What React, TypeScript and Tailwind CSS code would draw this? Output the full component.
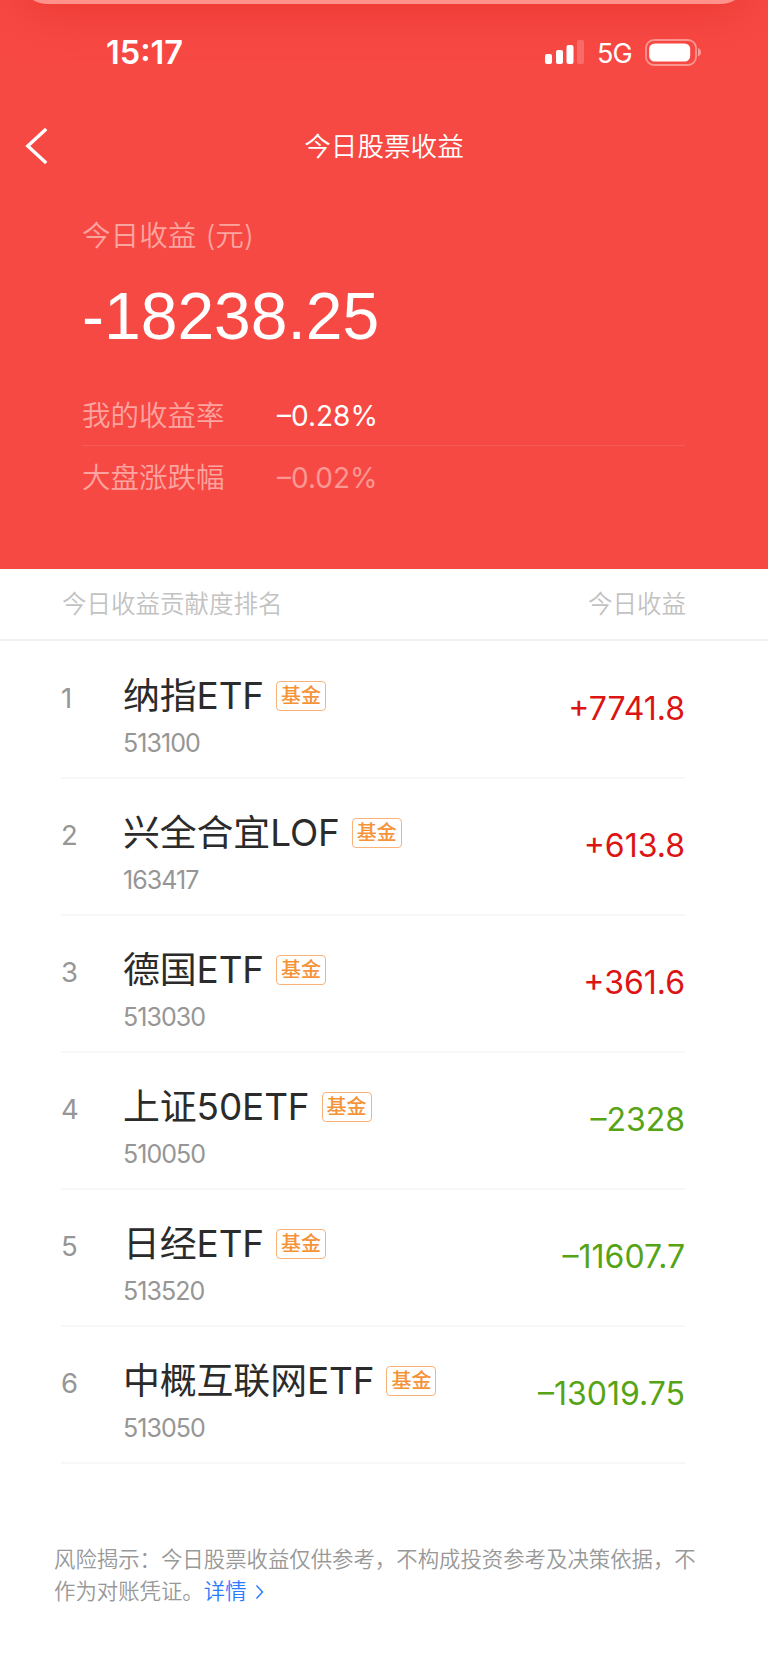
type Holding = {
  name: string;
  code: string;
  amount: string;
  rise: boolean;
};

const holdings: Holding[] = [
  { name: "纳指ETF", code: "513100", amount: "+7741.8", rise: true },
  { name: "兴全合宜LOF", code: "163417", amount: "+613.8", rise: true },
  { name: "德国ETF", code: "513030", amount: "+361.6", rise: true },
  { name: "上证50ETF", code: "510050", amount: "–2328", rise: false },
  { name: "日经ETF", code: "513520", amount: "–11607.7", rise: false },
  { name: "中概互联网ETF", code: "513050", amount: "–13019.75", rise: false },
];

export default function App() {
  return (
    <main className="h-[1665px] w-[768px] overflow-hidden bg-white font-['Inter','Noto_Sans_CJK_SC',sans-serif] whitespace-nowrap">
      <section className="relative h-[569px] overflow-hidden bg-[#f74944] text-white">
        <div className="absolute -top-[50px] left-[20px] h-[54px] w-[728px] rounded-[40px] bg-[#ff938c] shadow-[0_4px_50px_rgba(220,30,20,0.45)]" />
        <StatusBar />
        <Header />
        <Summary />
      </section>
      <div className="flex h-[72px] items-center justify-between border-b-2 border-[#f0f0f0] pt-px pr-[82px] pl-[62px] text-[24.5px] font-[350] text-[#c2c2c2]">
        <span>今日收益贡献度排名</span>
        <span>今日收益</span>
      </div>
      <ul className="pt-px pr-[83px] pl-[61px]">
        {holdings.map((item, i) => (
          <HoldingRow key={item.code} rank={i + 1} item={item} />
        ))}
      </ul>
      <Disclaimer />
    </main>
  );
}

function StatusBar() {
  return (
    <div className="relative flex h-[105px] items-center justify-between pr-[65px] pl-[106px]">
      <span className="pt-[2px] text-[32.5px] font-semibold">15:17</span>
      <div className="flex items-center">
        <svg width="40" height="26" viewBox="0 0 40 26" fill="currentColor">
          <rect x="0" y="14" width="7" height="10" rx="2" />
          <rect x="11" y="10" width="7" height="14" rx="2" />
          <rect x="21.5" y="5" width="7" height="19" rx="2" />
          <rect x="32" y="0" width="7" height="24" rx="2" opacity="0.2" />
        </svg>
        <span className="ml-[12px] w-[36px] pt-px text-[27px] leading-none tracking-[-0.8px]">5G</span>
        <svg className="ml-[12px]" width="58" height="28" viewBox="0 0 58 28" fill="currentColor">
          <rect x="1" y="1" width="50" height="25" rx="8" fill="none" stroke="currentColor" strokeWidth="1.8" opacity="0.42" />
          <rect x="4.2" y="4.5" width="41" height="18" rx="5.5" />
          <path d="M53 9c4 1.5 4 7 0 8.5z" opacity="0.45" />
        </svg>
      </div>
    </div>
  );
}

function Header() {
  return (
    <header className="relative flex h-[82px] items-center justify-center">
      <svg className="absolute top-[22px] left-[24px]" width="26" height="38" viewBox="0 0 26 38" fill="none">
        <path d="M22.2 2L3.8 19l18.4 17" stroke="currentColor" strokeWidth="3.4" />
      </svg>
      <h1 className="pt-px text-[26.6px] font-[350]">今日股票收益</h1>
    </header>
  );
}

function Summary() {
  return (
    <div className="pr-[83px] pl-[82px]">
      <p className="mt-[27px] h-[44px] text-[28.6px] leading-[44px] font-[350] text-[#fba4a0]">
        今日收益<span className="ml-[9px]">(元)</span>
      </p>
      <p className="mt-[20px] h-[76px] font-['Liberation_Sans',sans-serif] text-[66px] leading-[76px]">-18238.25</p>
      <div className="mt-[29px] border-b border-white/10">
        <Rate label="我的收益率" value="–0.28%" />
      </div>
      <div className="-mt-px text-[#fb9893]">
        <Rate label="大盘涨跌幅" value="–0.02%" />
      </div>
    </div>
  );
}

function Rate({ label, value }: { label: string; value: string }) {
  return (
    <div className="flex h-[62px] items-center pt-[4px] text-[28.5px]">
      <span className="w-[195px] font-[350] text-[#fba4a0]">{label}</span>
      <span className="text-[28px]">{value}</span>
    </div>
  );
}

function HoldingRow({ rank, item }: { rank: number; item: Holding }) {
  return (
    <li className="flex h-[137px] items-start border-b-2 border-[#f7f7f7]">
      <span className="mt-[36px] w-[62px] text-[27.5px] leading-[40px] text-[#969696]">{rank}</span>
      <div>
        <div className="mt-[32px] flex h-[44px] items-center">
          <span className="text-[36.9px] leading-[44px] tracking-[-0.1px] text-[#2b2b2b]">{item.name}</span>
          <span className="mb-px ml-[12px] flex h-[30px] w-[50px] items-center justify-center rounded-[4px] border border-[#f9b27a] text-[20px] leading-none font-medium text-[#f59338]">
            基金
          </span>
        </div>
        <p className="mt-[9px] text-[25px] leading-[32px] tracking-[-0.95px] text-[#969696]">{item.code}</p>
      </div>
      <span className={`mt-[45px] ml-auto text-[32px] leading-[44px] ${item.rise ? "text-[#dc1414]" : "text-[#56a314]"}`}>
        {item.amount}
      </span>
    </li>
  );
}

function Disclaimer() {
  return (
    <footer className="mt-[79px] pl-[54px] text-[21.4px] leading-[32px] font-[350] text-[#989898]">
      <p>风险揭示：今日股票收益仅供参考，不构成投资参考及决策依据，不</p>
      <p className="flex items-center">
        作为对账凭证。
        <a className="flex items-center text-[#2b7bff]">
          详情
          <svg className="ml-[8px]" width="10" height="17" viewBox="0 0 10 17" fill="none">
            <path d="M1.5 2.5l6 6.5-6 6.5" stroke="currentColor" strokeWidth="1.5" />
          </svg>
        </a>
      </p>
    </footer>
  );
}
